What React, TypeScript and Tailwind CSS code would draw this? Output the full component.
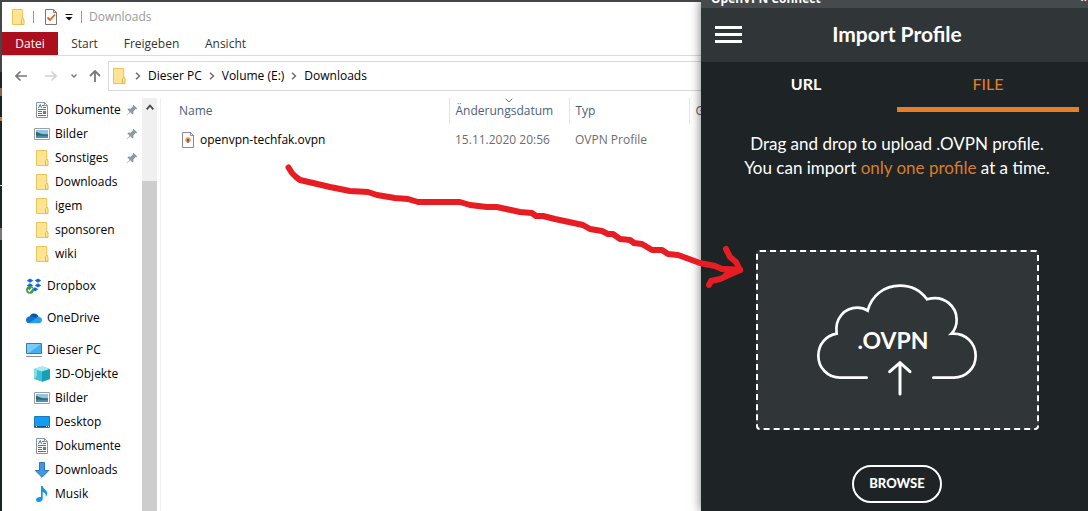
import type { ReactNode } from "react";

function FolderIcon() {
  return (
    <svg viewBox="0 0 16 16" className="size-4 shrink-0" aria-hidden="true">
      <path d="M2.500 .5h10.200v9h.8v6h-11z" fill="#ffe494" stroke="#e9c455" />
      <path d="M11.500 15.500v-5l1.200-1.200 1.300 1.200v5z" fill="#ffe9a0" stroke="#e3b93f" />
    </svg>
  );
}

function DocumentIcon() {
  return (
    <svg viewBox="0 0 16 16" className="size-4 shrink-0" aria-hidden="true">
      <path d="M2.500 .5h8l3 3v12h-11z" fill="#fdfdfd" stroke="#8d9296" />
      <path d="M10.500 .5v3h3" fill="none" stroke="#8d9296" />
      <path d="M4.500 6l1.700-3.500L7.500 6M8 3.500h2M9 5.500h3M4 7.500h8M4 9.500h4M4 11.500h4M4 13.500h8" fill="none" stroke="#1685cc" />
      <path d="M9 9h3v3h-3z" fill="#4d8299" />
    </svg>
  );
}

function PictureIcon() {
  return (
    <svg viewBox="0 0 16 16" className="size-4 shrink-0" aria-hidden="true">
      <path d="M.5 2.500h15v11h-15z" fill="#fff" stroke="#9a9ea2" />
      <path d="M2 4h12v8H2z" fill="#8fc3ea" />
      <path d="M2 6c2 0 3 1.500 6 2 2 .4 4 .4 6 .3V12H2z" fill="#32675b" />
      <path d="M2 9.800c4-1 8 .4 12-.3V12H2z" fill="#4b8cc0" />
    </svg>
  );
}

function DropboxIcon() {
  return (
    <svg viewBox="0 0 16 16" className="size-4 shrink-0" aria-hidden="true">
      <path d="M4 .5 7.300 2.600 4 4.700.8 2.600zM12 .5l3.200 2.100L12 4.700 8.700 2.600zM4 5.300l3.300 2.100L4 9.500.8 7.400zM12 5.300l3.200 2.100L12 9.500 8.700 7.400zM9 9.300l3.200 2L9 13.500l-3.200-2.200z" fill="#1466e8" />
      <circle cx="4" cy="11.800" r="3.900" fill="#3a9c3f" />
      <path d="M2 11.800l1.500 1.700L6.200 10" fill="none" stroke="#fff" strokeWidth="1.300" />
    </svg>
  );
}

function OneDriveIcon() {
  return (
    <svg viewBox="0 0 16 16" className="size-4 shrink-0" aria-hidden="true">
      <path d="M3 9c0-3 2-5.500 5-5.500 2.300 0 4 1.300 4.500 3.500L8 11z" fill="#0a55a5" />
      <path d="M3.500 6.500C1.500 6.600 0 8 0 10c0 2 1.300 3.300 3.200 3.300L12 9 7 6.800c-1-.4-2.300-.5-3.500-.3z" fill="#1173cb" />
      <path d="M12.500 6.800c2 0 3.500 1.500 3.500 3.300 0 1.900-1.400 3.200-3.200 3.200H3L10 8c.7-.8 1.500-1.200 2.500-1.200z" fill="#27a0ea" />
    </svg>
  );
}

function MonitorIcon() {
  return (
    <svg viewBox="0 0 16 16" className="size-4 shrink-0" aria-hidden="true">
      <path d="M.5 1.500h15v10H.5z" fill="#43aef2" stroke="#42779d" />
      <path d="M1 2h14L3 11H1z" fill="#79cbfa" />
      <path d="M0 14.500h16" stroke="#7f929f" />
    </svg>
  );
}

function CubeIcon() {
  return (
    <svg viewBox="0 0 16 16" className="size-4 shrink-0" aria-hidden="true">
      <path d="M0 3 8 .5 16 3v10l-8 2.700L0 13z" fill="#3fc0d3" />
      <path d="M0 3 8 .5 16 3 8 5.500z" fill="#a6e9f1" />
      <path d="M8 5.500 16 3v10l-8 2.700z" fill="#179fb7" />
      <path d="M0 3l3 1v6l-3 3z" fill="#87dce8" />
    </svg>
  );
}

function DesktopIcon() {
  return (
    <svg viewBox="0 0 16 16" className="size-4 shrink-0" aria-hidden="true">
      <path d="M.5 2.500h15v11H.5z" fill="#149bf2" stroke="#1978b9" />
      <path d="M1 12.500h14" stroke="#0b5486" />
      <path d="M2 12.500h1M12 12.500h1M14 12.500h1" stroke="#fff" />
    </svg>
  );
}

function DownloadIcon() {
  return (
    <svg viewBox="0 0 16 16" className="size-4 shrink-0" aria-hidden="true">
      <path d="M5.500 .5h5v8h4.300L8 15.300 1.200 8.500h4.300z" fill="#4197df" stroke="#2a77bd" />
    </svg>
  );
}

function MusicIcon() {
  return (
    <svg viewBox="0 0 16 16" className="size-4 shrink-0" aria-hidden="true">
      <path d="M7 0h1.700c.2 3 4.800 4 4.600 7.600-.1 1.700-1 2.700-1.600 3.400.5-3-.5-4-3-5v6.500C8.700 14.600 7 16 5 16s-3-1-3-2.300c0-1.700 2.300-3 5-2.700z" fill="#1497ea" />
    </svg>
  );
}

function PinIcon() {
  return (
    <svg viewBox="0 0 12 12" className="size-3 shrink-0" aria-label="Angeheftet">
      <path d="M7.500 .8 11.200 4.500 10.300 5.300 9.700 5 7.300 7.400 7.500 9.800 6.600 10.600 4.200 8.200 1 11.300.7 11 3.700 7.700 1.400 5.400 2.300 4.500 4.600 4.700 7 2.300 6.700 1.600z" fill="#8c9ba6" />
    </svg>
  );
}

function Chevron() {
  return (
    <svg viewBox="0 0 6 8" className="h-2 w-[6px] shrink-0" aria-hidden="true">
      <path d="M1 .8 4.500 4 1 7.200" fill="none" stroke="#666" strokeWidth="1.400" />
    </svg>
  );
}

type Entry = { label: string; icon: ReactNode; pinned?: boolean };

const quickAccess: Entry[] = [
  { label: "Dokumente", icon: <DocumentIcon />, pinned: true },
  { label: "Bilder", icon: <PictureIcon />, pinned: true },
  { label: "Sonstiges", icon: <FolderIcon />, pinned: true },
  { label: "Downloads", icon: <FolderIcon /> },
  { label: "igem", icon: <FolderIcon /> },
  { label: "sponsoren", icon: <FolderIcon /> },
  { label: "wiki", icon: <FolderIcon /> },
];

const computer: Entry[] = [
  { label: "3D-Objekte", icon: <CubeIcon /> },
  { label: "Bilder", icon: <PictureIcon /> },
  { label: "Desktop", icon: <DesktopIcon /> },
  { label: "Dokumente", icon: <DocumentIcon /> },
  { label: "Downloads", icon: <DownloadIcon /> },
  { label: "Musik", icon: <MusicIcon /> },
];

function TreeItem({ entry, nested = false }: { entry: Entry; nested?: boolean }) {
  return (
    <li>
      <a href="#" className={`flex h-6 items-center gap-[5px] pr-1 ${nested ? "pl-8" : "pl-6"}`}>
        {entry.icon}
        <span className="flex-1 whitespace-nowrap">{entry.label}</span>
        {entry.pinned && <PinIcon />}
      </a>
    </li>
  );
}

function Sidebar() {
  return (
    <div className="flex w-[159px] shrink-0 border-r border-[#f0f0f0]">
      <nav className="flex flex-1 flex-col gap-2 text-black">
        <ul>
          {quickAccess.map((e) => (
            <TreeItem key={e.label} entry={e} nested />
          ))}
        </ul>
        <ul>
          <TreeItem entry={{ label: "Dropbox", icon: <DropboxIcon /> }} />
        </ul>
        <ul>
          <TreeItem entry={{ label: "OneDrive", icon: <OneDriveIcon /> }} />
        </ul>
        <ul>
          <TreeItem entry={{ label: "Dieser PC", icon: <MonitorIcon /> }} />
          {computer.map((e) => (
            <TreeItem key={e.label} entry={e} nested />
          ))}
        </ul>
      </nav>
      <div className="mr-[3px] flex w-[15px] flex-col bg-[#f0f0f0]">
        <button aria-label="Nach oben" className="flex h-[83px] items-start justify-center pt-1.5">
          <svg viewBox="0 0 8 6" className="h-[6px] w-2" aria-hidden="true">
            <path d="M.7 5.300 4 1.500 7.300 5.300" fill="none" stroke="#444" strokeWidth="1.800" />
          </svg>
        </button>
        <div className="flex-1 bg-[#cdcdcd]" />
      </div>
    </div>
  );
}

function FileTable() {
  return (
    <div className="min-w-0 flex-1 overflow-hidden">
      <table className="w-full table-fixed text-left whitespace-nowrap">
        <colgroup>
          <col className="w-[288px]" />
          <col className="w-[120px]" />
          <col className="w-[120px]" />
          <col />
        </colgroup>
        <thead>
          <tr className="h-[26px] text-[#4c607a]">
            <th className="border-r border-[#e5e5e5] pl-[18px] font-normal">Name</th>
            <th className="relative border-r border-[#e5e5e5] pl-1.5 font-normal">
              Änderungsdatum
              <svg viewBox="0 0 8 5" className="absolute top-0 left-[55px] h-[5px] w-2" aria-hidden="true">
                <path d="M.7 .7 4 4 7.300 .7" fill="none" stroke="#777" />
              </svg>
            </th>
            <th className="border-r border-[#e5e5e5] pl-1.5 font-normal">Typ</th>
            <th className="overflow-hidden pl-1.5 font-normal">Größe</th>
          </tr>
        </thead>
        <tbody>
          <tr className="h-8 text-[#6d6d6d]">
            <td className="pl-[19px] text-black">
              <span className="flex items-center gap-1">
                <svg viewBox="0 0 16 16" className="size-4" aria-hidden="true">
                  <path d="M2.500 .5h8l3 3v12h-11z" fill="#fbfbfb" stroke="#8b8b8b" />
                  <path d="M10.500 .5v3h3" fill="none" stroke="#8b8b8b" />
                  <circle cx="8" cy="8" r="2.800" fill="#e9a066" />
                  <circle cx="8" cy="8" r="1.200" fill="#5c5a62" />
                  <path d="M7.500 8h1v3h-1z" fill="#5c5a62" />
                </svg>
                openvpn-techfak.ovpn
              </span>
            </td>
            <td className="pl-1.5">15.11.2020 20:56</td>
            <td className="pl-1.5">OVPN Profile</td>
            <td />
          </tr>
        </tbody>
      </table>
    </div>
  );
}

function Explorer() {
  return (
    <section className="flex min-w-0 flex-1 flex-col overflow-hidden border-t-2 border-[#43474a] bg-white font-['Open_Sans','Noto_Sans',sans-serif] text-xs">
      <header className="flex h-[30px] items-center pl-2 text-[#999]">
        <FolderIcon />
        <span className="ml-[7px] h-3 w-px bg-[#999]" />
        <svg viewBox="0 0 14 16" className="ml-2.5 h-4 w-[14px]" aria-hidden="true">
          <path d="M1.500 .5h8l3 3v12h-11z" fill="#fff" stroke="#777" />
          <path d="M9.500 .5v3h3" fill="none" stroke="#777" />
          <path d="M3.500 8.500 6 11l5-5.500" fill="none" stroke="#e85a1c" strokeWidth="1.800" />
        </svg>
        <svg viewBox="0 0 8 7" className="ml-[7px] h-[7px] w-2" aria-hidden="true">
          <path d="M.5 .5h7" stroke="#111" />
          <path d="M.5 3h7L4 6.500z" fill="#111" />
        </svg>
        <span className="mr-[7px] ml-2 h-3 w-px bg-[#999]" />
        <span>Downloads</span>
      </header>
      <nav className="flex h-6 items-stretch border-b border-[#dadbdc] text-[#333]">
        <button className="w-14 bg-[#ab0f1d] text-white">Datei</button>
        <button className="w-[53px]">Start</button>
        <button className="w-[81px]">Freigeben</button>
        <button className="w-[67px]">Ansicht</button>
      </nav>
      <div className="flex h-[42px] items-start pt-[5px]">
        <div className="flex h-[30px] w-[106px] items-center pl-[13px]">
          <button aria-label="Zurück">
            <svg viewBox="0 0 12 10" className="h-[10px] w-3">
              <path d="M12 5H1M5.500 .5 1 5l4.500 4.500" fill="none" stroke="#777" strokeWidth="1.600" />
            </svg>
          </button>
          <button aria-label="Vorwärts" className="ml-[18px]">
            <svg viewBox="0 0 12 10" className="h-[10px] w-3">
              <path d="M0 5h11M6.500 .5 11 5 6.500 9.500" fill="none" stroke="#d2d2d2" strokeWidth="1.600" />
            </svg>
          </button>
          <button aria-label="Verlauf" className="ml-3.5">
            <svg viewBox="0 0 6 4" className="h-1 w-[6px]">
              <path d="M.5 .5 3 3 5.500 .5" fill="none" stroke="#777" strokeWidth="1.400" />
            </svg>
          </button>
          <button aria-label="Übergeordneter Ordner" className="ml-3">
            <svg viewBox="0 0 12 12" className="size-3">
              <path d="M6 12V1M1 6l5-5 5 5" fill="none" stroke="#777" strokeWidth="1.800" />
            </svg>
          </button>
        </div>
        <div className="flex h-[30px] flex-1 items-center border border-r-0 border-[#d9d9d9] pl-[2px] whitespace-nowrap text-black">
          <FolderIcon />
          <span className="ml-2 flex items-center gap-[7px]">
            <Chevron />
            <a href="#">Dieser PC</a>
            <Chevron />
            <a href="#">Volume (E:)</a>
            <Chevron />
            <a href="#">Downloads</a>
          </span>
        </div>
      </div>
      <div className="flex flex-1">
        <Sidebar />
        <FileTable />
      </div>
    </section>
  );
}

function CloudUpload() {
  return (
    <svg viewBox="225 127 492 342" className="h-[114px] w-[164px]" fill="none" stroke="#fff" strokeWidth="8" strokeLinecap="round">
      <path d="M380 411H300C262 411 235 380 235 345C235 310 258 285 290 279C283 232 315 201 352 201C363 201 374 204 383 210C395 165 432 135 480 135C512 135 542 150 561 176C615 160 650 200 650 237C650 252 645 268 634 279C678 276 707 308 707 345C707 382 678 411 642 411H580" />
      <path d="M480 460V366M449 393 480 366 510 393" strokeWidth="9" />
      <text x="459" y="326" textAnchor="middle" fontSize="69" fontWeight="700" fill="#fff" stroke="none">
        .OVPN
      </text>
    </svg>
  );
}

function ImportPanel() {
  return (
    <section className="z-10 flex w-[387px] shrink-0 flex-col bg-[#1e2426] font-[Lato,sans-serif] text-white shadow-[0_0_10px_rgba(0,0,0,0.55)]">
      <div className="flex h-2 items-end justify-between overflow-hidden bg-[#454b4d] pr-px pb-[3px] pl-2.5 font-['Open_Sans',sans-serif] text-xs leading-3 font-bold">
        <span>OpenVPN Connect</span>
        <span>×</span>
      </div>
      <header className="flex h-[54px] items-center bg-[#303638] pr-[9px] pb-[2px] pl-[14px]">
        <button aria-label="Menü" className="flex w-[27px] flex-col gap-1">
          <span className="h-[3px] bg-white" />
          <span className="h-[3px] bg-white" />
          <span className="h-[3px] bg-white" />
        </button>
        <h1 className="flex-1 pr-[27px] text-center text-[21px] leading-6 font-bold">Import Profile</h1>
      </header>
      <div role="tablist" className="flex h-[50px] pr-[9px] pl-[14px] text-base leading-5 font-bold">
        <button role="tab" aria-selected="false" className="flex-1 border-b-[5px] border-transparent pb-[2px]">
          URL
        </button>
        <button role="tab" aria-selected="true" className="flex-1 border-b-[5px] border-[#e87f26] pb-[2px] font-normal text-[#e87f26]">
          FILE
        </button>
      </div>
      <div className="flex flex-1 flex-col items-center pt-5 pr-[9px] pl-[14px]">
        <p className="text-center text-[17px] leading-6 whitespace-nowrap">
          Drag and drop to upload .OVPN profile.
          <br />
          You can import <span className="text-[#d97c2b]">only one profile</span> at a time.
        </p>
        <div className="mt-[70px] flex h-[180px] w-[283px] items-center justify-center rounded-[4px] border-2 border-dashed border-white bg-[#303638]">
          <CloudUpload />
        </div>
        <button className="mt-[35px] h-[38px] w-[90px] rounded-full border-2 border-white text-[13px] font-black">BROWSE</button>
      </div>
    </section>
  );
}

function HandDrawnArrow() {
  return (
    <svg
      viewBox="280 160 470 130"
      className="pointer-events-none absolute top-40 left-[280px] z-20 h-[130px] w-[470px]"
      fill="none"
      stroke="#e81c23"
      strokeWidth="6"
      strokeLinecap="round"
      strokeLinejoin="round"
      aria-hidden="true"
    >
      <path d="M288.500 167.500 292 173 296 177 300 180 313 183 330 187 350 191 368 192 377 195 395 198 408 199 418 202 460 202 470 205 487 207 497 207 520 212 532 213 536 216 543 216 555 219 583 225 590 229 602 231 608 234 613 234 620 239 630 240 634 243 642 244 652 250 662 250 668 254 678 255 700 263 715 266 722 269 740 270" />
      <path d="M726 249 730 257 736 262 740 270 720 279 711 281 709 285" />
      <path d="M722 269 740 270 726 275" />
    </svg>
  );
}

function BackgroundEdge() {
  return (
    <div className="flex w-[2px] shrink-0 flex-col bg-[#1e2426]" aria-hidden="true">
      <span className="h-[72px] bg-[#43474a]" />
      <span className="mt-4 h-2 bg-[#8a6544]" />
      <span className="mt-[21px] h-1 bg-[#c77434]" />
      <span className="mt-16 h-px bg-[#ddd]" />
      <span className="mt-[42px] h-3 bg-[#777]" />
    </div>
  );
}

export default function App() {
  return (
    <main className="relative flex min-h-screen overflow-hidden">
      <BackgroundEdge />
      <Explorer />
      <ImportPanel />
      <HandDrawnArrow />
    </main>
  );
}
